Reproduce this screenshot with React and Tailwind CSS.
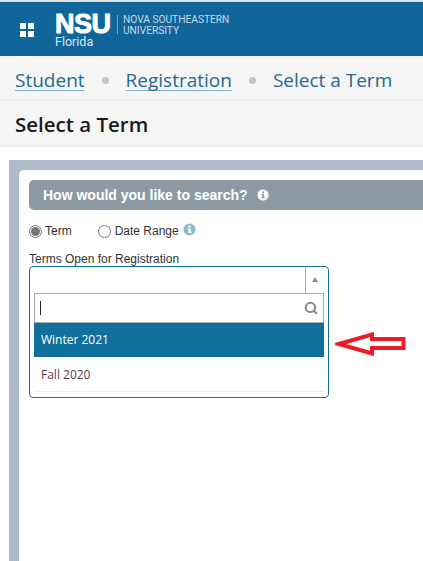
import { Search } from 'lucide-react';

function InfoIcon({ className }) {
  return (
    <svg viewBox="0 0 14 14" className={className}>
      <circle cx="7" cy="7" r="6.5" fill="currentColor" />
      <rect x="6" y="6" width="2.4" height="4.6" fill="var(--hole)" />
      <rect x="5.2" y="9.6" width="4" height="1.2" fill="var(--hole)" />
      <rect x="5.2" y="6" width="2" height="1" fill="var(--hole)" />
      <circle cx="7.1" cy="3.9" r="1.3" fill="var(--hole)" />
    </svg>
  );
}

function Radio({ checked }) {
  return (
    <span className="flex h-[13px] w-[13px] shrink-0 items-center justify-center rounded-full border border-[#767676] bg-white">
      {checked && <span className="h-[9px] w-[9px] rounded-full bg-[#757575]" />}
    </span>
  );
}

export default function App() {
  return (
    <div className="h-[561px] w-[423px] overflow-hidden bg-white font-['Open_Sans',sans-serif]">
      <div className="h-[2px] bg-[#dfe3e6]" />
      <header className="flex h-[54px] items-start bg-[#10659b] text-white">
        <div className="ml-[20px] mt-[21px] grid h-[14px] w-[14px] grid-cols-2 gap-[2px]">
          <span className="bg-white" />
          <span className="bg-white" />
          <span className="bg-white" />
          <span className="bg-white" />
        </div>
        <div className="ml-[21px] mt-[11px] flex flex-col">
          <div className="flex items-start">
            <span className="h-[22px] w-[57px] font-['Liberation_Sans',sans-serif] text-[27px] leading-[22px] font-bold tracking-[-0.5px] text-white [-webkit-text-stroke:1px_white]">NSU</span>
            <span className="ml-[5px] mt-[2px] h-[19px] w-px bg-[#7ea9c6]" />
            <span className="ml-[5px] mt-px font-['Roboto',sans-serif] text-[10.2px] leading-[11px] text-[#c9dce9]">
              NOVA SOUTHEASTERN
              <br />
              UNIVERSITY
            </span>
          </div>
          <span className="font-['Roboto',sans-serif] text-[12.5px] leading-[12px] text-[#dbe8f1]">Florida</span>
        </div>
      </header>

      <nav className="flex h-[45px] items-center border-b-2 border-[#eeeeee] bg-[#f5f5f5] pl-[15px] pt-[6px] text-[19px] text-[#26688f]">
        <span className="underline decoration-[#7fb0c8] underline-offset-[3px] [text-decoration-skip-ink:none]">Student</span>
        <span className="ml-[17px] h-[7px] w-[7px] rounded-full bg-[#c4c4c4]" />
        <span className="ml-[17px] underline decoration-[#7fb0c8] underline-offset-[3px] [text-decoration-skip-ink:none]">Registration</span>
        <span className="ml-[17px] h-[7px] w-[7px] rounded-full bg-[#c4c4c4]" />
        <span className="ml-[17px]">Select a Term</span>
      </nav>

      <div className="flex h-[46px] items-center border-b-2 border-[#eeeeee] bg-[#f5f5f5] pl-[15px] pt-[3px] text-[20.5px] font-semibold text-[#1a1a1a]">
        Select a Term
      </div>

      <main className="ml-[9px] mt-[13px] h-[401px] bg-[#aebbc8] pl-[10px] pt-[10px]">
        <section className="h-full rounded-tl-[5px] bg-white pl-[10px] pt-[10px] font-['Liberation_Sans',sans-serif]">
          <div className="flex h-[30px] items-center gap-[9px] rounded-l-[5px] bg-[#8e9aa3] pl-[14px] text-[14px] font-bold text-white">
            How would you like to search?
            <InfoIcon className="h-[12px] w-[12px] text-white [--hole:#8e9aa3]" />
          </div>

          <div className="mt-[11px] flex h-[20px] items-center text-[12px] text-[#333333]">
            <Radio checked />
            <span className="ml-[3px]">Term</span>
            <span className="ml-[26px]"><Radio /></span>
            <span className="ml-[4px]">Date Range</span>
            <InfoIcon className="mb-[3px] ml-[4px] h-[13px] w-[13px] text-[#8dbcc9] [--hole:#ffffff]" />
          </div>

          <label className="mt-[12px] block text-[12px] leading-[13px] text-[#333333]">Terms Open for Registration</label>

          <div className="flex h-[132px] w-[300px] flex-col rounded-[4px] border border-[#10709b] bg-white px-[4px]">
            <div className="flex h-[26px] shrink-0 justify-end">
              <div className="flex w-[19px] items-center justify-center border-l border-[#aaaaaa] pb-px">
                <span className="h-0 w-0 border-x-[3.5px] border-b-[5px] border-x-transparent border-b-[#888888]" />
              </div>
            </div>
            <div className="flex h-[30px] shrink-0 items-center justify-between border border-[#aaaaaa] pl-[5px] pr-[5px]">
              <span className="h-[14px] w-px bg-[#222222]" />
              <Search size={14} strokeWidth={3.5} className="mb-px text-[#888888]" />
            </div>
            <div className="flex h-[34px] shrink-0 items-center bg-[#10709b] pl-[7px] font-['Open_Sans',sans-serif] text-[12px] text-white">
              Winter 2021
            </div>
            <div className="flex h-[35px] shrink-0 items-center border-b border-[#eeeeee] pl-[7px] pt-[2px] font-['Open_Sans',sans-serif] text-[12px] text-[#5c3a52]">
              Fall 2020
            </div>
          </div>
        </section>
      </main>

      <svg viewBox="0 0 72 24" className="absolute left-[335px] top-[332px] h-[24px] w-[72px]" fill="none">
        <path d="M4 12 L37 2.5 L37 7 L68.5 7 L68.5 16 L37 16 L37 21.5 Z" stroke="#ed1c24" strokeWidth="4" />
      </svg>
    </div>
  );
}
